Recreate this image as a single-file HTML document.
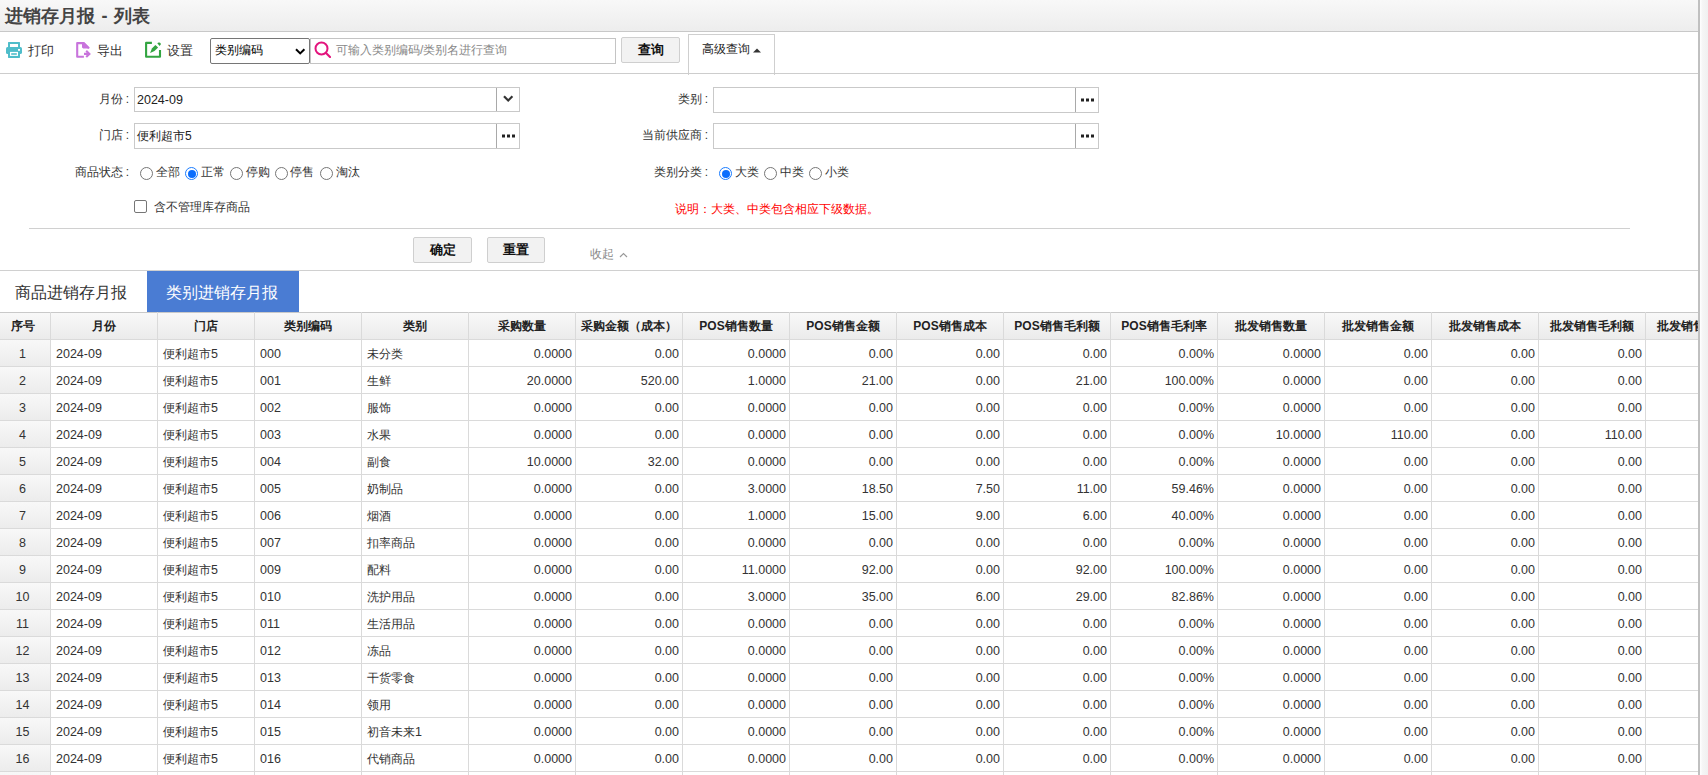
<!DOCTYPE html>
<html><head><meta charset="utf-8"><title>进销存月报 - 列表</title>
<style>
*{box-sizing:border-box}
html,body{margin:0;padding:0;background:#fff}
body{width:1708px;height:775px;overflow:hidden;position:relative;font-family:"Liberation Sans",sans-serif;color:#333;font-size:12px}
#app{position:absolute;left:0;top:0;width:1698px;height:775px;overflow:hidden;background:#fff}
#rbar{position:absolute;left:1698px;top:0;width:2px;height:775px;background:#c0c0c0}
#rstrip{position:absolute;left:1700px;top:0;width:8px;height:775px;background:linear-gradient(90deg,#fdfdfd 0,#fdfdfd 1px,#f6f6f6 2px,#f0f0f0)}
.abs{position:absolute;white-space:nowrap}
#title{position:absolute;left:0;top:0;width:1698px;height:31px;background:linear-gradient(#f8f8f8,#ededed)}
#titleline{position:absolute;left:0;top:31px;width:1698px;height:1px;background:#c8c8c8}
#titletxt{position:absolute;left:5px;top:1px;word-spacing:1.4px;height:31px;line-height:31px;font-size:18px;font-weight:bold;color:#444}
#tbline{position:absolute;left:0;top:73px;width:1698px;height:1px;background:#cdcdcd}
.tbtxt{position:absolute;top:42px;height:18px;line-height:18px;font-size:13px;color:#333}
.icon{position:absolute}
#sel{position:absolute;left:210px;top:38px;width:100px;height:26px;border:1px solid #767676;border-radius:2px;background:#fff}
#seltxt{position:absolute;left:4px;top:-1px;line-height:24px;font-size:12px;color:#000}
#search{position:absolute;left:310px;top:38px;width:306px;height:26px;border:1px solid #c4c4c4;background:#fff}
#ph{position:absolute;left:25px;top:-1px;line-height:24px;font-size:12px;color:#888}
.btn{position:absolute;background:#f2f2f2;border:1px solid #cfcfcf;border-radius:2px;font-weight:bold;font-size:13px;color:#111;text-align:center}
#adv{position:absolute;left:688px;top:34px;width:87px;height:41px;border:1px solid #cfcfcf;border-bottom:none;background:#fff}
#advtxt{position:absolute;left:13px;top:5px;line-height:18px;font-size:12px;color:#222}
.lbl{position:absolute;font-size:12px;color:#333;text-align:right;line-height:16px;white-space:nowrap}
.inp{position:absolute;height:26px;border:1px solid #c9c9c9;background:#fff}
.inp .v{position:absolute;left:2px;top:0;line-height:24px;font-size:12px;color:#222}
.inp .bt{position:absolute;right:0;top:0;width:23px;height:24px;border-left:1px solid #a9a9a9}
.radio{position:absolute;width:13px;height:13px;border:1px solid #767676;border-radius:50%;background:#fff}
.radio.on{border-color:#1a7cff}
.radio.on::after{content:"";position:absolute;left:1.5px;top:1.5px;width:8px;height:8px;border-radius:50%;background:#0b6efd}
.rl{position:absolute;font-size:12px;color:#333;line-height:16px;white-space:nowrap}
.hl{position:absolute;left:0;width:1698px;height:1px;background:#dadada}
.vl{position:absolute;top:312px;width:1px;height:463px;background:#dadada}
.th{position:absolute;top:313px;height:26px;line-height:26px;text-align:center;font-weight:bold;font-size:12px;color:#222;background:linear-gradient(#f8f8f8,#ebebeb);white-space:nowrap;overflow:hidden}
.rn{position:absolute;left:0;width:50px;height:26px;background:linear-gradient(#f8f8f8,#ececec)}
.c{position:absolute;height:26px;line-height:28px;font-size:12.5px;color:#333;padding:0 5px;white-space:nowrap;overflow:hidden}
.c .z{font-size:12px;position:relative;top:0px}
.cn{text-align:center;padding:0 5px 0 0}
.cr{text-align:right;padding:0 3px 0 0}

.colon{margin-left:2.5px}

</style></head><body>
<div id="app">
<div id="title"><div id="titletxt">进销存月报 - 列表</div></div>
<div id="titleline"></div>
<!-- toolbar -->
<svg class="icon" style="left:0;top:36px" width="30" height="28" viewBox="0 0 30 28"><path fill="#4fbdca" d="M8.6 6h10.8a0.6 0.6 0 0 1 0.6 0.6V11.5h-2V8h-8v3.5H8V6.6a0.6 0.6 0 0 1 0.6-0.6z"/><rect x="6" y="11" width="16" height="7" rx="1.6" fill="#4fbdca"/><rect x="18" y="13" width="2" height="1.8" fill="#fff"/><rect x="8" y="15.9" width="12" height="6" rx="0.6" fill="#4fbdca"/><rect x="10" y="15.9" width="8" height="4" fill="#fff"/><rect x="11.2" y="17.2" width="5.6" height="1.6" fill="#4fbdca"/></svg>
<div class="tbtxt" style="left:28px">打印</div>
<svg class="icon" style="left:70px;top:36px" width="30" height="28" viewBox="0 0 30 28"><path fill="none" stroke="#c874dc" stroke-width="2.1" stroke-linejoin="round" d="M13.9 20.8H7.2V7.1H13.6L18.9 12.2"/><path fill="#c874dc" d="M12 6.1h1.9L19.3 11.4V12.6H13.2L12 11.4z"/><path fill="none" stroke="#c874dc" stroke-width="2.1" d="M14 17.9h5.6 M16.2 14.7l3.2 3.2-3.2 3.2"/></svg>
<div class="tbtxt" style="left:97px">导出</div>
<svg class="icon" style="left:138px;top:36px" width="30" height="28" viewBox="0 0 30 28"><path fill="none" stroke="#33a541" stroke-width="2.1" stroke-linejoin="round" d="M13.9 6.9H8.1V20.8H22V13.9"/><path fill="#33a541" d="M12.1 16.9L13.9 12.6L17.4 8.9L20.1 11.5L16.5 14.9z"/><path fill="#33a541" d="M19.3 7.3A2 2 0 0 1 22.9 8.3L21.6 9.9z"/></svg>
<div class="tbtxt" style="left:167px">设置</div>
<div id="sel"><div id="seltxt">类别编码</div><svg style="position:absolute;left:84px;top:9px" width="11" height="7" viewBox="0 0 11 7"><path d="M1 1.2l4.2 4.2L9.4 1.2" fill="none" stroke="#000" stroke-width="2"/></svg></div>
<div id="search"><svg style="position:absolute;left:3px;top:2px" width="17" height="17" viewBox="0 0 17 17"><circle cx="7.5" cy="7.5" r="6" fill="none" stroke="#e3147d" stroke-width="2"/><path d="M12 12l4 4" stroke="#e3147d" stroke-width="2.2" stroke-linecap="round"/></svg><div id="ph">可输入类别编码/类别名进行查询</div></div>
<div class="btn" style="left:621px;top:37px;width:59px;height:26px;line-height:24px">查询</div>
<div id="adv"><div id="advtxt">高级查询</div><svg style="position:absolute;left:64px;top:13px" width="8" height="5" viewBox="0 0 8 5"><path d="M0 4.5L4 0.5L8 4.5z" fill="#333"/></svg></div>
<div id="tbline"></div>
<!-- form -->
<div class="lbl" style="left:60px;top:91px;width:69px">月份<span class="colon">:</span></div>
<div class="inp" style="left:134px;top:87px;width:386px;height:25px"><div class="v" style="font-size:12.5px">2024-09</div><div class="bt" style="height:23px"><svg style="position:absolute;left:6px;top:7px" width="11" height="8" viewBox="0 0 11 8"><path d="M1 1.3l4.2 4.2L9.4 1.3" fill="none" stroke="#333" stroke-width="2.2"/></svg></div></div>
<div class="lbl" style="left:60px;top:127px;width:69px">门店<span class="colon">:</span></div>
<div class="inp" style="left:134px;top:123px;width:386px"><div class="v">便利超市5</div><div class="bt"><svg style="position:absolute;left:5px;top:10px" width="13" height="4" viewBox="0 0 13 4"><rect x="0" y="0.5" width="3" height="3" fill="#222"/><rect x="5" y="0.5" width="3" height="3" fill="#222"/><rect x="10" y="0.5" width="3" height="3" fill="#222"/></svg></div></div>
<div class="lbl" style="left:560px;top:91px;width:148px">类别<span class="colon">:</span></div>
<div class="inp" style="left:713px;top:87px;width:386px"><div class="bt"><svg style="position:absolute;left:5px;top:10px" width="13" height="4" viewBox="0 0 13 4"><rect x="0" y="0.5" width="3" height="3" fill="#222"/><rect x="5" y="0.5" width="3" height="3" fill="#222"/><rect x="10" y="0.5" width="3" height="3" fill="#222"/></svg></div></div>
<div class="lbl" style="left:560px;top:127px;width:148px">当前供应商<span class="colon">:</span></div>
<div class="inp" style="left:713px;top:123px;width:386px"><div class="bt"><svg style="position:absolute;left:5px;top:10px" width="13" height="4" viewBox="0 0 13 4"><rect x="0" y="0.5" width="3" height="3" fill="#222"/><rect x="5" y="0.5" width="3" height="3" fill="#222"/><rect x="10" y="0.5" width="3" height="3" fill="#222"/></svg></div></div>
<div class="lbl" style="left:40px;top:164px;width:89px">商品状态<span class="colon">:</span></div>
<div class="radio" style="left:140px;top:167px"></div><div class="rl" style="left:156px;top:164px">全部</div>
<div class="radio on" style="left:185px;top:167px"></div><div class="rl" style="left:201px;top:164px">正常</div>
<div class="radio" style="left:230px;top:167px"></div><div class="rl" style="left:246px;top:164px">停购</div>
<div class="radio" style="left:275px;top:167px"></div><div class="rl" style="left:290px;top:164px">停售</div>
<div class="radio" style="left:320px;top:167px"></div><div class="rl" style="left:336px;top:164px">淘汰</div>
<div class="lbl" style="left:560px;top:164px;width:148px">类别分类<span class="colon">:</span></div>
<div class="radio on" style="left:719px;top:167px"></div><div class="rl" style="left:735px;top:164px">大类</div>
<div class="radio" style="left:764px;top:167px"></div><div class="rl" style="left:780px;top:164px">中类</div>
<div class="radio" style="left:809px;top:167px"></div><div class="rl" style="left:825px;top:164px">小类</div>
<div style="position:absolute;left:134px;top:200px;width:13px;height:13px;border:1px solid #767676;border-radius:2px;background:#fff"></div>
<div class="rl" style="left:154px;top:199px">含不管理库存商品</div>
<div class="rl" style="left:675px;top:201px;color:#f00">说明：大类、中类包含相应下级数据。</div>
<div style="position:absolute;left:29px;top:228px;width:1601px;height:1px;background:#d0d0d0"></div>
<div class="btn" style="left:413px;top:237px;width:59px;height:26px;line-height:24px">确定</div>
<div class="btn" style="left:487px;top:237px;width:58px;height:26px;line-height:24px">重置</div>
<div class="rl" style="left:590px;top:246px;color:#888">收起</div>
<svg class="icon" style="left:619px;top:252px" width="9" height="6" viewBox="0 0 9 6"><path d="M1 5L4.5 1.5L8 5" fill="none" stroke="#999" stroke-width="1.2"/></svg>
<div style="position:absolute;left:0;top:270px;width:1698px;height:1px;background:#d0d0d0"></div>
<!-- tabs -->
<div class="abs" style="left:15px;top:283px;font-size:16px;line-height:20px;color:#333">商品进销存月报</div>
<div class="abs" style="left:147px;top:271px;width:152px;height:41px;background:#4a7cd3"></div>
<div class="abs" style="left:166px;top:283px;font-size:16px;line-height:20px;color:#fff">类别进销存月报</div>

<div id="tbl">
<div class="hl" style="top:312px;background:#c9c9c9"></div><div class="th" style="left:0px;width:50px;padding-right:4px">序号</div><div class="th" style="left:51px;width:106px">月份</div><div class="th" style="left:158px;width:96px">门店</div><div class="th" style="left:255px;width:106px">类别编码</div><div class="th" style="left:362px;width:106px">类别</div><div class="th" style="left:469px;width:106px">采购数量</div><div class="th" style="left:576px;width:106px">采购金额（成本）</div><div class="th" style="left:683px;width:106px">POS销售数量</div><div class="th" style="left:790px;width:106px">POS销售金额</div><div class="th" style="left:897px;width:106px">POS销售成本</div><div class="th" style="left:1004px;width:106px">POS销售毛利额</div><div class="th" style="left:1111px;width:106px">POS销售毛利率</div><div class="th" style="left:1218px;width:106px">批发销售数量</div><div class="th" style="left:1325px;width:106px">批发销售金额</div><div class="th" style="left:1432px;width:106px">批发销售成本</div><div class="th" style="left:1539px;width:106px">批发销售毛利额</div><div class="th" style="left:1646px;width:106px">批发销售毛利率</div><div class="rn" style="top:340px"></div><div class="rn" style="top:367px"></div><div class="rn" style="top:394px"></div><div class="rn" style="top:421px"></div><div class="rn" style="top:448px"></div><div class="rn" style="top:475px"></div><div class="rn" style="top:502px"></div><div class="rn" style="top:529px"></div><div class="rn" style="top:556px"></div><div class="rn" style="top:583px"></div><div class="rn" style="top:610px"></div><div class="rn" style="top:637px"></div><div class="rn" style="top:664px"></div><div class="rn" style="top:691px"></div><div class="rn" style="top:718px"></div><div class="rn" style="top:745px"></div><div class="rn" style="top:772px"></div><div class="hl" style="top:339px"></div><div class="hl" style="top:366px"></div><div class="hl" style="top:393px"></div><div class="hl" style="top:420px"></div><div class="hl" style="top:447px"></div><div class="hl" style="top:474px"></div><div class="hl" style="top:501px"></div><div class="hl" style="top:528px"></div><div class="hl" style="top:555px"></div><div class="hl" style="top:582px"></div><div class="hl" style="top:609px"></div><div class="hl" style="top:636px"></div><div class="hl" style="top:663px"></div><div class="hl" style="top:690px"></div><div class="hl" style="top:717px"></div><div class="hl" style="top:744px"></div><div class="hl" style="top:771px"></div><div class="hl" style="top:798px"></div><div class="vl" style="left:50px"></div><div class="vl" style="left:157px"></div><div class="vl" style="left:254px"></div><div class="vl" style="left:361px"></div><div class="vl" style="left:468px"></div><div class="vl" style="left:575px"></div><div class="vl" style="left:682px"></div><div class="vl" style="left:789px"></div><div class="vl" style="left:896px"></div><div class="vl" style="left:1003px"></div><div class="vl" style="left:1110px"></div><div class="vl" style="left:1217px"></div><div class="vl" style="left:1324px"></div><div class="vl" style="left:1431px"></div><div class="vl" style="left:1538px"></div><div class="vl" style="left:1645px"></div><div class="c cn" style="left:0px;top:340px;width:50px">1</div><div class="c" style="left:51px;top:340px;width:106px">2024-09</div><div class="c" style="left:158px;top:340px;width:96px"><span class="z">便利超市</span>5</div><div class="c" style="left:255px;top:340px;width:106px">000</div><div class="c" style="left:362px;top:340px;width:106px"><span class="z">未分类</span></div><div class="c cr" style="left:469px;top:340px;width:106px">0.0000</div><div class="c cr" style="left:576px;top:340px;width:106px">0.00</div><div class="c cr" style="left:683px;top:340px;width:106px">0.0000</div><div class="c cr" style="left:790px;top:340px;width:106px">0.00</div><div class="c cr" style="left:897px;top:340px;width:106px">0.00</div><div class="c cr" style="left:1004px;top:340px;width:106px">0.00</div><div class="c cr" style="left:1111px;top:340px;width:106px">0.00%</div><div class="c cr" style="left:1218px;top:340px;width:106px">0.0000</div><div class="c cr" style="left:1325px;top:340px;width:106px">0.00</div><div class="c cr" style="left:1432px;top:340px;width:106px">0.00</div><div class="c cr" style="left:1539px;top:340px;width:106px">0.00</div><div class="c cn" style="left:0px;top:367px;width:50px">2</div><div class="c" style="left:51px;top:367px;width:106px">2024-09</div><div class="c" style="left:158px;top:367px;width:96px"><span class="z">便利超市</span>5</div><div class="c" style="left:255px;top:367px;width:106px">001</div><div class="c" style="left:362px;top:367px;width:106px"><span class="z">生鲜</span></div><div class="c cr" style="left:469px;top:367px;width:106px">20.0000</div><div class="c cr" style="left:576px;top:367px;width:106px">520.00</div><div class="c cr" style="left:683px;top:367px;width:106px">1.0000</div><div class="c cr" style="left:790px;top:367px;width:106px">21.00</div><div class="c cr" style="left:897px;top:367px;width:106px">0.00</div><div class="c cr" style="left:1004px;top:367px;width:106px">21.00</div><div class="c cr" style="left:1111px;top:367px;width:106px">100.00%</div><div class="c cr" style="left:1218px;top:367px;width:106px">0.0000</div><div class="c cr" style="left:1325px;top:367px;width:106px">0.00</div><div class="c cr" style="left:1432px;top:367px;width:106px">0.00</div><div class="c cr" style="left:1539px;top:367px;width:106px">0.00</div><div class="c cn" style="left:0px;top:394px;width:50px">3</div><div class="c" style="left:51px;top:394px;width:106px">2024-09</div><div class="c" style="left:158px;top:394px;width:96px"><span class="z">便利超市</span>5</div><div class="c" style="left:255px;top:394px;width:106px">002</div><div class="c" style="left:362px;top:394px;width:106px"><span class="z">服饰</span></div><div class="c cr" style="left:469px;top:394px;width:106px">0.0000</div><div class="c cr" style="left:576px;top:394px;width:106px">0.00</div><div class="c cr" style="left:683px;top:394px;width:106px">0.0000</div><div class="c cr" style="left:790px;top:394px;width:106px">0.00</div><div class="c cr" style="left:897px;top:394px;width:106px">0.00</div><div class="c cr" style="left:1004px;top:394px;width:106px">0.00</div><div class="c cr" style="left:1111px;top:394px;width:106px">0.00%</div><div class="c cr" style="left:1218px;top:394px;width:106px">0.0000</div><div class="c cr" style="left:1325px;top:394px;width:106px">0.00</div><div class="c cr" style="left:1432px;top:394px;width:106px">0.00</div><div class="c cr" style="left:1539px;top:394px;width:106px">0.00</div><div class="c cn" style="left:0px;top:421px;width:50px">4</div><div class="c" style="left:51px;top:421px;width:106px">2024-09</div><div class="c" style="left:158px;top:421px;width:96px"><span class="z">便利超市</span>5</div><div class="c" style="left:255px;top:421px;width:106px">003</div><div class="c" style="left:362px;top:421px;width:106px"><span class="z">水果</span></div><div class="c cr" style="left:469px;top:421px;width:106px">0.0000</div><div class="c cr" style="left:576px;top:421px;width:106px">0.00</div><div class="c cr" style="left:683px;top:421px;width:106px">0.0000</div><div class="c cr" style="left:790px;top:421px;width:106px">0.00</div><div class="c cr" style="left:897px;top:421px;width:106px">0.00</div><div class="c cr" style="left:1004px;top:421px;width:106px">0.00</div><div class="c cr" style="left:1111px;top:421px;width:106px">0.00%</div><div class="c cr" style="left:1218px;top:421px;width:106px">10.0000</div><div class="c cr" style="left:1325px;top:421px;width:106px">110.00</div><div class="c cr" style="left:1432px;top:421px;width:106px">0.00</div><div class="c cr" style="left:1539px;top:421px;width:106px">110.00</div><div class="c cn" style="left:0px;top:448px;width:50px">5</div><div class="c" style="left:51px;top:448px;width:106px">2024-09</div><div class="c" style="left:158px;top:448px;width:96px"><span class="z">便利超市</span>5</div><div class="c" style="left:255px;top:448px;width:106px">004</div><div class="c" style="left:362px;top:448px;width:106px"><span class="z">副食</span></div><div class="c cr" style="left:469px;top:448px;width:106px">10.0000</div><div class="c cr" style="left:576px;top:448px;width:106px">32.00</div><div class="c cr" style="left:683px;top:448px;width:106px">0.0000</div><div class="c cr" style="left:790px;top:448px;width:106px">0.00</div><div class="c cr" style="left:897px;top:448px;width:106px">0.00</div><div class="c cr" style="left:1004px;top:448px;width:106px">0.00</div><div class="c cr" style="left:1111px;top:448px;width:106px">0.00%</div><div class="c cr" style="left:1218px;top:448px;width:106px">0.0000</div><div class="c cr" style="left:1325px;top:448px;width:106px">0.00</div><div class="c cr" style="left:1432px;top:448px;width:106px">0.00</div><div class="c cr" style="left:1539px;top:448px;width:106px">0.00</div><div class="c cn" style="left:0px;top:475px;width:50px">6</div><div class="c" style="left:51px;top:475px;width:106px">2024-09</div><div class="c" style="left:158px;top:475px;width:96px"><span class="z">便利超市</span>5</div><div class="c" style="left:255px;top:475px;width:106px">005</div><div class="c" style="left:362px;top:475px;width:106px"><span class="z">奶制品</span></div><div class="c cr" style="left:469px;top:475px;width:106px">0.0000</div><div class="c cr" style="left:576px;top:475px;width:106px">0.00</div><div class="c cr" style="left:683px;top:475px;width:106px">3.0000</div><div class="c cr" style="left:790px;top:475px;width:106px">18.50</div><div class="c cr" style="left:897px;top:475px;width:106px">7.50</div><div class="c cr" style="left:1004px;top:475px;width:106px">11.00</div><div class="c cr" style="left:1111px;top:475px;width:106px">59.46%</div><div class="c cr" style="left:1218px;top:475px;width:106px">0.0000</div><div class="c cr" style="left:1325px;top:475px;width:106px">0.00</div><div class="c cr" style="left:1432px;top:475px;width:106px">0.00</div><div class="c cr" style="left:1539px;top:475px;width:106px">0.00</div><div class="c cn" style="left:0px;top:502px;width:50px">7</div><div class="c" style="left:51px;top:502px;width:106px">2024-09</div><div class="c" style="left:158px;top:502px;width:96px"><span class="z">便利超市</span>5</div><div class="c" style="left:255px;top:502px;width:106px">006</div><div class="c" style="left:362px;top:502px;width:106px"><span class="z">烟酒</span></div><div class="c cr" style="left:469px;top:502px;width:106px">0.0000</div><div class="c cr" style="left:576px;top:502px;width:106px">0.00</div><div class="c cr" style="left:683px;top:502px;width:106px">1.0000</div><div class="c cr" style="left:790px;top:502px;width:106px">15.00</div><div class="c cr" style="left:897px;top:502px;width:106px">9.00</div><div class="c cr" style="left:1004px;top:502px;width:106px">6.00</div><div class="c cr" style="left:1111px;top:502px;width:106px">40.00%</div><div class="c cr" style="left:1218px;top:502px;width:106px">0.0000</div><div class="c cr" style="left:1325px;top:502px;width:106px">0.00</div><div class="c cr" style="left:1432px;top:502px;width:106px">0.00</div><div class="c cr" style="left:1539px;top:502px;width:106px">0.00</div><div class="c cn" style="left:0px;top:529px;width:50px">8</div><div class="c" style="left:51px;top:529px;width:106px">2024-09</div><div class="c" style="left:158px;top:529px;width:96px"><span class="z">便利超市</span>5</div><div class="c" style="left:255px;top:529px;width:106px">007</div><div class="c" style="left:362px;top:529px;width:106px"><span class="z">扣率商品</span></div><div class="c cr" style="left:469px;top:529px;width:106px">0.0000</div><div class="c cr" style="left:576px;top:529px;width:106px">0.00</div><div class="c cr" style="left:683px;top:529px;width:106px">0.0000</div><div class="c cr" style="left:790px;top:529px;width:106px">0.00</div><div class="c cr" style="left:897px;top:529px;width:106px">0.00</div><div class="c cr" style="left:1004px;top:529px;width:106px">0.00</div><div class="c cr" style="left:1111px;top:529px;width:106px">0.00%</div><div class="c cr" style="left:1218px;top:529px;width:106px">0.0000</div><div class="c cr" style="left:1325px;top:529px;width:106px">0.00</div><div class="c cr" style="left:1432px;top:529px;width:106px">0.00</div><div class="c cr" style="left:1539px;top:529px;width:106px">0.00</div><div class="c cn" style="left:0px;top:556px;width:50px">9</div><div class="c" style="left:51px;top:556px;width:106px">2024-09</div><div class="c" style="left:158px;top:556px;width:96px"><span class="z">便利超市</span>5</div><div class="c" style="left:255px;top:556px;width:106px">009</div><div class="c" style="left:362px;top:556px;width:106px"><span class="z">配料</span></div><div class="c cr" style="left:469px;top:556px;width:106px">0.0000</div><div class="c cr" style="left:576px;top:556px;width:106px">0.00</div><div class="c cr" style="left:683px;top:556px;width:106px">11.0000</div><div class="c cr" style="left:790px;top:556px;width:106px">92.00</div><div class="c cr" style="left:897px;top:556px;width:106px">0.00</div><div class="c cr" style="left:1004px;top:556px;width:106px">92.00</div><div class="c cr" style="left:1111px;top:556px;width:106px">100.00%</div><div class="c cr" style="left:1218px;top:556px;width:106px">0.0000</div><div class="c cr" style="left:1325px;top:556px;width:106px">0.00</div><div class="c cr" style="left:1432px;top:556px;width:106px">0.00</div><div class="c cr" style="left:1539px;top:556px;width:106px">0.00</div><div class="c cn" style="left:0px;top:583px;width:50px">10</div><div class="c" style="left:51px;top:583px;width:106px">2024-09</div><div class="c" style="left:158px;top:583px;width:96px"><span class="z">便利超市</span>5</div><div class="c" style="left:255px;top:583px;width:106px">010</div><div class="c" style="left:362px;top:583px;width:106px"><span class="z">洗护用品</span></div><div class="c cr" style="left:469px;top:583px;width:106px">0.0000</div><div class="c cr" style="left:576px;top:583px;width:106px">0.00</div><div class="c cr" style="left:683px;top:583px;width:106px">3.0000</div><div class="c cr" style="left:790px;top:583px;width:106px">35.00</div><div class="c cr" style="left:897px;top:583px;width:106px">6.00</div><div class="c cr" style="left:1004px;top:583px;width:106px">29.00</div><div class="c cr" style="left:1111px;top:583px;width:106px">82.86%</div><div class="c cr" style="left:1218px;top:583px;width:106px">0.0000</div><div class="c cr" style="left:1325px;top:583px;width:106px">0.00</div><div class="c cr" style="left:1432px;top:583px;width:106px">0.00</div><div class="c cr" style="left:1539px;top:583px;width:106px">0.00</div><div class="c cn" style="left:0px;top:610px;width:50px">11</div><div class="c" style="left:51px;top:610px;width:106px">2024-09</div><div class="c" style="left:158px;top:610px;width:96px"><span class="z">便利超市</span>5</div><div class="c" style="left:255px;top:610px;width:106px">011</div><div class="c" style="left:362px;top:610px;width:106px"><span class="z">生活用品</span></div><div class="c cr" style="left:469px;top:610px;width:106px">0.0000</div><div class="c cr" style="left:576px;top:610px;width:106px">0.00</div><div class="c cr" style="left:683px;top:610px;width:106px">0.0000</div><div class="c cr" style="left:790px;top:610px;width:106px">0.00</div><div class="c cr" style="left:897px;top:610px;width:106px">0.00</div><div class="c cr" style="left:1004px;top:610px;width:106px">0.00</div><div class="c cr" style="left:1111px;top:610px;width:106px">0.00%</div><div class="c cr" style="left:1218px;top:610px;width:106px">0.0000</div><div class="c cr" style="left:1325px;top:610px;width:106px">0.00</div><div class="c cr" style="left:1432px;top:610px;width:106px">0.00</div><div class="c cr" style="left:1539px;top:610px;width:106px">0.00</div><div class="c cn" style="left:0px;top:637px;width:50px">12</div><div class="c" style="left:51px;top:637px;width:106px">2024-09</div><div class="c" style="left:158px;top:637px;width:96px"><span class="z">便利超市</span>5</div><div class="c" style="left:255px;top:637px;width:106px">012</div><div class="c" style="left:362px;top:637px;width:106px"><span class="z">冻品</span></div><div class="c cr" style="left:469px;top:637px;width:106px">0.0000</div><div class="c cr" style="left:576px;top:637px;width:106px">0.00</div><div class="c cr" style="left:683px;top:637px;width:106px">0.0000</div><div class="c cr" style="left:790px;top:637px;width:106px">0.00</div><div class="c cr" style="left:897px;top:637px;width:106px">0.00</div><div class="c cr" style="left:1004px;top:637px;width:106px">0.00</div><div class="c cr" style="left:1111px;top:637px;width:106px">0.00%</div><div class="c cr" style="left:1218px;top:637px;width:106px">0.0000</div><div class="c cr" style="left:1325px;top:637px;width:106px">0.00</div><div class="c cr" style="left:1432px;top:637px;width:106px">0.00</div><div class="c cr" style="left:1539px;top:637px;width:106px">0.00</div><div class="c cn" style="left:0px;top:664px;width:50px">13</div><div class="c" style="left:51px;top:664px;width:106px">2024-09</div><div class="c" style="left:158px;top:664px;width:96px"><span class="z">便利超市</span>5</div><div class="c" style="left:255px;top:664px;width:106px">013</div><div class="c" style="left:362px;top:664px;width:106px"><span class="z">干货零食</span></div><div class="c cr" style="left:469px;top:664px;width:106px">0.0000</div><div class="c cr" style="left:576px;top:664px;width:106px">0.00</div><div class="c cr" style="left:683px;top:664px;width:106px">0.0000</div><div class="c cr" style="left:790px;top:664px;width:106px">0.00</div><div class="c cr" style="left:897px;top:664px;width:106px">0.00</div><div class="c cr" style="left:1004px;top:664px;width:106px">0.00</div><div class="c cr" style="left:1111px;top:664px;width:106px">0.00%</div><div class="c cr" style="left:1218px;top:664px;width:106px">0.0000</div><div class="c cr" style="left:1325px;top:664px;width:106px">0.00</div><div class="c cr" style="left:1432px;top:664px;width:106px">0.00</div><div class="c cr" style="left:1539px;top:664px;width:106px">0.00</div><div class="c cn" style="left:0px;top:691px;width:50px">14</div><div class="c" style="left:51px;top:691px;width:106px">2024-09</div><div class="c" style="left:158px;top:691px;width:96px"><span class="z">便利超市</span>5</div><div class="c" style="left:255px;top:691px;width:106px">014</div><div class="c" style="left:362px;top:691px;width:106px"><span class="z">领用</span></div><div class="c cr" style="left:469px;top:691px;width:106px">0.0000</div><div class="c cr" style="left:576px;top:691px;width:106px">0.00</div><div class="c cr" style="left:683px;top:691px;width:106px">0.0000</div><div class="c cr" style="left:790px;top:691px;width:106px">0.00</div><div class="c cr" style="left:897px;top:691px;width:106px">0.00</div><div class="c cr" style="left:1004px;top:691px;width:106px">0.00</div><div class="c cr" style="left:1111px;top:691px;width:106px">0.00%</div><div class="c cr" style="left:1218px;top:691px;width:106px">0.0000</div><div class="c cr" style="left:1325px;top:691px;width:106px">0.00</div><div class="c cr" style="left:1432px;top:691px;width:106px">0.00</div><div class="c cr" style="left:1539px;top:691px;width:106px">0.00</div><div class="c cn" style="left:0px;top:718px;width:50px">15</div><div class="c" style="left:51px;top:718px;width:106px">2024-09</div><div class="c" style="left:158px;top:718px;width:96px"><span class="z">便利超市</span>5</div><div class="c" style="left:255px;top:718px;width:106px">015</div><div class="c" style="left:362px;top:718px;width:106px"><span class="z">初音未来</span>1</div><div class="c cr" style="left:469px;top:718px;width:106px">0.0000</div><div class="c cr" style="left:576px;top:718px;width:106px">0.00</div><div class="c cr" style="left:683px;top:718px;width:106px">0.0000</div><div class="c cr" style="left:790px;top:718px;width:106px">0.00</div><div class="c cr" style="left:897px;top:718px;width:106px">0.00</div><div class="c cr" style="left:1004px;top:718px;width:106px">0.00</div><div class="c cr" style="left:1111px;top:718px;width:106px">0.00%</div><div class="c cr" style="left:1218px;top:718px;width:106px">0.0000</div><div class="c cr" style="left:1325px;top:718px;width:106px">0.00</div><div class="c cr" style="left:1432px;top:718px;width:106px">0.00</div><div class="c cr" style="left:1539px;top:718px;width:106px">0.00</div><div class="c cn" style="left:0px;top:745px;width:50px">16</div><div class="c" style="left:51px;top:745px;width:106px">2024-09</div><div class="c" style="left:158px;top:745px;width:96px"><span class="z">便利超市</span>5</div><div class="c" style="left:255px;top:745px;width:106px">016</div><div class="c" style="left:362px;top:745px;width:106px"><span class="z">代销商品</span></div><div class="c cr" style="left:469px;top:745px;width:106px">0.0000</div><div class="c cr" style="left:576px;top:745px;width:106px">0.00</div><div class="c cr" style="left:683px;top:745px;width:106px">0.0000</div><div class="c cr" style="left:790px;top:745px;width:106px">0.00</div><div class="c cr" style="left:897px;top:745px;width:106px">0.00</div><div class="c cr" style="left:1004px;top:745px;width:106px">0.00</div><div class="c cr" style="left:1111px;top:745px;width:106px">0.00%</div><div class="c cr" style="left:1218px;top:745px;width:106px">0.0000</div><div class="c cr" style="left:1325px;top:745px;width:106px">0.00</div><div class="c cr" style="left:1432px;top:745px;width:106px">0.00</div><div class="c cr" style="left:1539px;top:745px;width:106px">0.00</div>
</div>
</div>
<div id="rbar"></div><div id="rstrip"></div>
</body></html>
